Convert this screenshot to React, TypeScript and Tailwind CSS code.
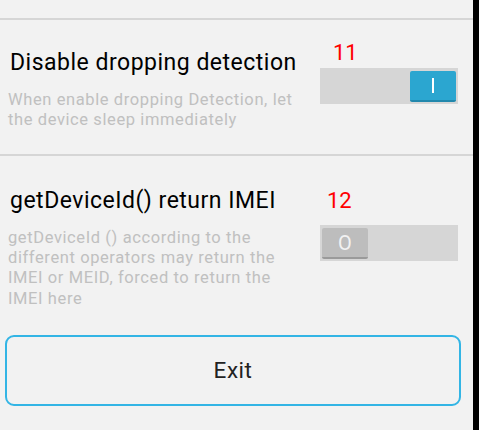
import React from "react";

const font = { fontFamily: "Roboto, 'Noto Sans', sans-serif" };

function Switch({ on }: { on: boolean }) {
  return (
    <div className="relative w-[138px] h-[36px] bg-[#d6d6d6]">
      {on ? (
        <div className="absolute right-[2px] top-[3px] w-[46px] h-[31px] rounded-[2px] bg-[#2ba6d0] border-b-2 border-[#2288ad] flex items-center justify-center">
          <div className="w-[2px] h-[15px] bg-white" />
        </div>
      ) : (
        <div className="absolute left-[2px] top-[3px] w-[46px] h-[31px] rounded-[2px] bg-[#bdbdbd] border-b-2 border-[#9a9a9a] flex items-center justify-center text-[20px] leading-none text-[#f2f2f2]">
          O
        </div>
      )}
    </div>
  );
}

export default function App() {
  return (
    <div className="flex w-[479px] h-[430px] bg-black overflow-hidden" style={font}>
      <div className="w-[473px] h-full bg-[#f2f2f2] flex flex-col">
        <div className="h-[18px]" />
        <div className="h-[2px] bg-[#d6d6d6]" />
        {/* Section 1 */}
        <div className="flex h-[134px]">
          <div className="w-[310px] pl-[10px] shrink-0">
            <div className="mt-[29px] text-[23px] leading-[28px] tracking-[0.5px] whitespace-nowrap text-black">
              Disable dropping detection
            </div>
            <div className="mt-[13px] -ml-[2px] text-[16.5px] leading-[20px] tracking-[0.6px] whitespace-nowrap text-[#c0c0c0]">
              When enable dropping Detection, let
              <br />
              the device sleep immediately
            </div>
          </div>
          <div className="pl-[10px] flex flex-col">
            <div className="mt-[18.5px] pl-[13px] text-[22px] leading-[28px] text-[#ff0000]">11</div>
            <div className="mt-[1.5px]">
              <Switch on={true} />
            </div>
          </div>
        </div>
        <div className="h-[2px] bg-[#d6d6d6]" />
        {/* Section 2 */}
        <div className="flex">
          <div className="w-[310px] pl-[10px] shrink-0">
            <div className="mt-[31px] text-[23px] leading-[28px] tracking-[0.5px] whitespace-nowrap text-black">
              getDeviceId() return IMEI
            </div>
            <div className="mt-[12.5px] -ml-[2px] text-[16.5px] leading-[20.4px] tracking-[0.6px] whitespace-nowrap text-[#c0c0c0]">
              getDeviceId () according to the
              <br />
              different operators may return the
              <br />
              IMEI or MEID, forced to return the
              <br />
              IMEI here
            </div>
          </div>
          <div className="pl-[10px] flex flex-col">
            <div className="mt-[30.5px] pl-[7px] text-[22px] leading-[28px] text-[#ff0000]">12</div>
            <div className="mt-[10.5px]">
              <Switch on={false} />
            </div>
          </div>
        </div>
        <div className="mt-[26px] ml-[5px] w-[456px] h-[71px] border-2 border-[#33b5e5] rounded-[9px] flex items-center justify-center text-[22.5px] tracking-[0.5px] text-[#222222]">
          Exit
        </div>
      </div>
      <div className="w-[6px] h-full bg-black" />
    </div>
  );
}
